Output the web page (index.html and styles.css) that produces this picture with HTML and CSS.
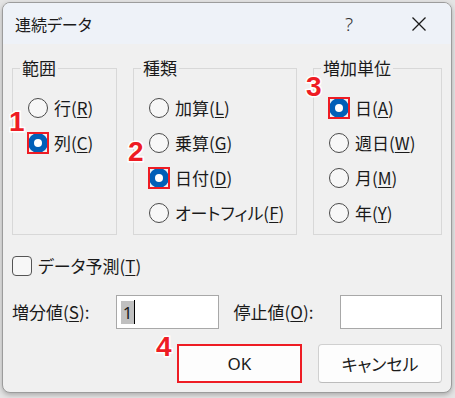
FILE: index.html
```html
<!DOCTYPE html>
<html lang="ja">
<head>
<meta charset="utf-8">
<link rel="stylesheet" href="styles.css">
</head>
<body>
<div class="dialog">
  <div class="titlebar">
    <span class="title">連続データ</span>
    <span class="help">?</span>
    <svg class="close" width="14" height="14" viewBox="0 0 14 14"><path d="M0.5 0.5 L13.5 13.5 M13.5 0.5 L0.5 13.5" stroke="#1a1a1a" stroke-width="1.3" fill="none"/></svg>
  </div>
  <div class="content">
    <div class="groups">
      <fieldset class="grp g1">
        <legend>範囲</legend>
        <div class="opts">
          <div class="opt"><span class="radio"></span><span>行(<u>R</u>)</span></div>
          <div class="opt"><span class="radio on mark"></span><span>列(<u>C</u>)</span></div>
        </div>
      </fieldset>
      <fieldset class="grp g2">
        <legend>種類</legend>
        <div class="opts">
          <div class="opt"><span class="radio"></span><span>加算(<u>L</u>)</span></div>
          <div class="opt"><span class="radio"></span><span>乗算(<u>G</u>)</span></div>
          <div class="opt"><span class="radio on mark"></span><span>日付(<u>D</u>)</span></div>
          <div class="opt"><span class="radio"></span><span>オートフィル(<u>F</u>)</span></div>
        </div>
      </fieldset>
      <fieldset class="grp g3">
        <legend>増加単位</legend>
        <div class="opts">
          <div class="opt"><span class="radio on mark"></span><span>日(<u>A</u>)</span></div>
          <div class="opt"><span class="radio"></span><span>週日(<u>W</u>)</span></div>
          <div class="opt"><span class="radio"></span><span>月(<u>M</u>)</span></div>
          <div class="opt"><span class="radio"></span><span>年(<u>Y</u>)</span></div>
        </div>
      </fieldset>
    </div>
    <div class="check-row"><span class="checkbox"></span><span>データ予測(<u>T</u>)</span></div>
    <div class="input-row">
      <span class="lbl l1">増分値(<u>S</u>):</span>
      <div class="field f1"><span class="sel">1</span><span class="caret"></span></div>
      <span class="lbl l2">停止値(<u>O</u>):</span>
      <div class="field f2"></div>
    </div>
    <div class="buttons">
      <div class="btn ok">OK</div>
      <div class="btn cancel">キャンセル</div>
    </div>
  </div>
</div>
<span class="num n1">1</span>
<span class="num n2">2</span>
<span class="num n3">3</span>
<span class="num n4">4</span>
</body>
</html>
```
FILE: styles.css
```css
html, body {
  margin: 0;
  padding: 0;
}
body {
  width: 455px;
  height: 398px;
  background: #e4e4e4;
  position: relative;
  overflow: hidden;
  font-family: "Noto Sans CJK JP", "Noto Sans", sans-serif;
  font-feature-settings: "palt";
  color: #1a1a1a;
}
.dialog {
  box-sizing: border-box;
  margin: 2px 0 0 2px;
  width: 450px;
  height: 391px;
  border: 1px solid #9c9c9c;
  border-radius: 8px;
  background: #f0f0f0;
  overflow: hidden;
  box-shadow: 0 2px 5px rgba(0,0,0,0.25);
  display: flex;
  flex-direction: column;
}
.titlebar {
  height: 41px;
  background: #eef2f8;
  display: flex;
  align-items: center;
  padding-left: 12px;
  flex: none;
}
.title {
  font-size: 16px;
  line-height: 20px;
  flex: 1;
}
.help {
  font-family: "Noto Sans", sans-serif;
  font-size: 19px;
  font-weight: 300;
  line-height: 20px;
  color: #333;
  margin-right: 59px;
}
.close {
  margin-right: 25px;
  display: block;
}
.content {
  padding: 0 9px;
  font-size: 17px;
}
.groups {
  margin-top: 14px;
  display: flex;
  gap: 16px;
  align-items: stretch;
}
.grp {
  margin: 0;
  padding: 0;
  border: 1px solid #d8d8d8;
  min-width: 0;
}
.g1 { width: 105px; box-sizing: border-box; }
.g2 { width: 164px; box-sizing: border-box; }
.g3 { width: 129px; box-sizing: border-box; }
legend {
  margin-left: 7px;
  padding: 0 2px;
  font-size: 17px;
  line-height: 20px;
}
.opts {
  padding: 12px 0 4px 15px;
  display: flex;
  flex-direction: column;
}
.opt {
  height: 35px;
  display: flex;
  align-items: center;
  gap: 6px;
  line-height: 20px;
  white-space: nowrap;
}
u {
  text-decoration-thickness: 1px;
  text-underline-offset: 2px;
}
.radio {
  box-sizing: border-box;
  width: 20px;
  height: 20px;
  border-radius: 50%;
  border: 1px solid #4a4a4a;
  background: #f7f7f7;
  position: relative;
  flex: none;
}
.radio.on {
  border: none;
  background: #005fb8;
}
.radio.on::before {
  content: "";
  position: absolute;
  left: 6px;
  top: 6px;
  width: 8px;
  height: 8px;
  border-radius: 50%;
  background: #fff;
}
.radio.mark::after {
  content: "";
  position: absolute;
  left: -1px;
  top: -1px;
  width: 22px;
  height: 22px;
  box-sizing: border-box;
  border: 2px solid #ee1c24;
}
.check-row {
  margin-top: 21px;
  height: 20px;
  display: flex;
  align-items: center;
  gap: 6px;
  line-height: 20px;
}
.checkbox {
  box-sizing: border-box;
  width: 20px;
  height: 20px;
  border: 1px solid #555;
  border-radius: 4px;
  background: #f7f7f7;
}
.input-row {
  margin-top: 19px;
  height: 34px;
  display: flex;
  align-items: center;
}
.lbl {
  line-height: 20px;
  white-space: nowrap;
}
.l1 { width: 104px; }
.l2 { width: 107px; margin-left: 15px; }
.field {
  box-sizing: border-box;
  height: 34px;
  background: #fff;
  border: 1px solid #a8a8a8;
  display: flex;
  align-items: center;
  padding-left: 4px;
}
.f1 { width: 103px; }
.f2 { width: 102px; }
.sel {
  background: #c0c0c0;
  font-family: "Noto Sans", sans-serif;
  font-size: 17px;
  line-height: 23px;
  padding: 0 2px;
}
.caret {
  width: 1px;
  height: 24px;
  background: #000;
}
.buttons {
  margin-top: 15px;
  display: flex;
  justify-content: flex-end;
  gap: 16px;
}
.btn {
  box-sizing: border-box;
  height: 39px;
  display: flex;
  align-items: center;
  justify-content: center;
  background: #fdfdfd;
  font-size: 17px;
}
.ok {
  width: 125px;
  border: 2px solid #ee1c24;
  font-family: "Noto Sans", sans-serif;
}
.cancel {
  width: 124px;
  border: 1px solid #d0d0d0;
  border-bottom-color: #bcbcbc;
  border-radius: 4px;
}
.num {
  position: absolute;
  font-family: "Liberation Sans", Arial, sans-serif;
  font-weight: bold;
  font-size: 28px;
  line-height: 28px;
  color: #ee1c24;
  -webkit-text-stroke: 3px #fff;
  paint-order: stroke fill;
}
.n1 { left: 9px; top: 108px; }
.n2 { left: 128px; top: 138px; }
.n3 { left: 306px; top: 73px; }
.n4 { left: 156px; top: 333px; }
```
